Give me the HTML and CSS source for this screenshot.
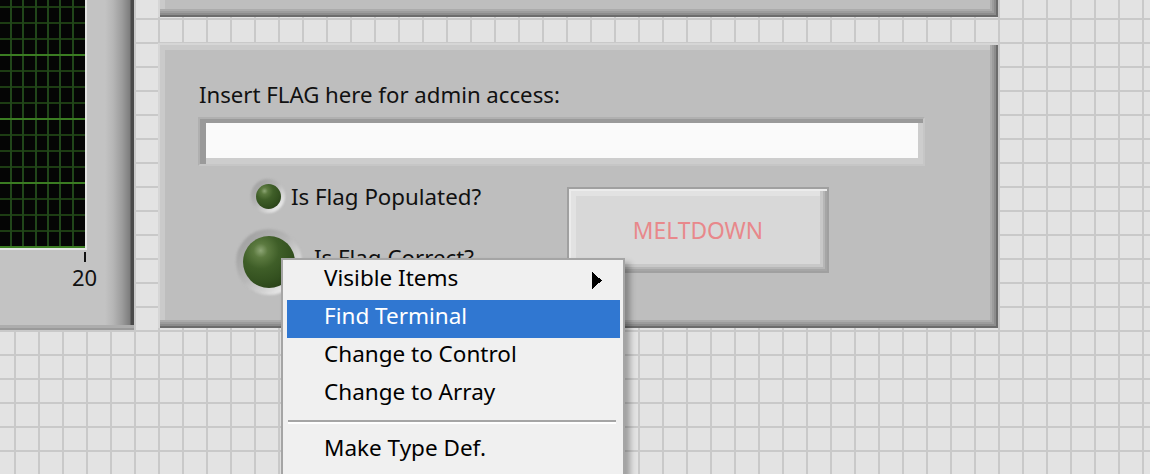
FILE: index.html
```html
<!DOCTYPE html>
<html>
<head>
<meta charset="utf-8">
<link rel="stylesheet" href="styles.css">
</head>
<body>
<div class="canvas">
  <div class="chart-panel">
    <svg class="plot" width="85" height="248" viewBox="0 0 85 248" shape-rendering="crispEdges">
      <rect width="85" height="248" fill="#050505"/>
      <g fill="#1d3c13">
        <rect x="0" y="6" width="85" height="2"/><rect x="0" y="22" width="85" height="2"/>
        <rect x="0" y="38" width="85" height="2"/><rect x="0" y="70" width="85" height="2"/>
        <rect x="0" y="86" width="85" height="2"/><rect x="0" y="102" width="85" height="2"/>
        <rect x="0" y="134" width="85" height="2"/><rect x="0" y="150" width="85" height="2"/>
        <rect x="0" y="166" width="85" height="2"/><rect x="0" y="198" width="85" height="2"/>
        <rect x="0" y="214" width="85" height="2"/><rect x="0" y="230" width="85" height="2"/>
      </g>
      <g fill="#21461a">
        <rect x="10" y="0" width="2" height="248"/><rect x="22" y="0" width="2" height="248"/>
        <rect x="35" y="0" width="2" height="248"/><rect x="47" y="0" width="2" height="248"/>
        <rect x="59" y="0" width="2" height="248"/><rect x="72" y="0" width="2" height="248"/>
      </g>
      <g fill="#3b7c22">
        <rect x="0" y="54" width="85" height="2"/><rect x="0" y="118" width="85" height="2"/>
        <rect x="0" y="182" width="85" height="2"/><rect x="0" y="246" width="85" height="2"/>
      </g>
    </svg>
    <div class="tick"></div>
    <div class="scale-label">20</div>
  </div>
  <div class="top-panel"></div>
  <div class="main-panel">
    <div class="flag-label">Insert FLAG here for admin access:</div>
    <div class="string-box"><div class="string-field"></div></div>
    <div class="lower">
      <div class="indicators">
        <div class="ind ind-small">
          <span class="led-halo"><span class="led"></span></span>
          <span class="ind-label">Is Flag Populated?</span>
        </div>
        <div class="ind ind-big">
          <span class="led-halo"><span class="led"></span></span>
          <span class="ind-label">Is Flag Correct?</span>
        </div>
      </div>
      <div class="btn">MELTDOWN</div>
    </div>
  </div>
</div>
<div class="menu">
  <div class="item">Visible Items<svg class="arrow" width="10" height="17" viewBox="0 0 10 17" shape-rendering="crispEdges"><polygon points="0,0 10,8.5 0,17" fill="#000"/></svg></div>
  <div class="item active">Find Terminal</div>
  <div class="item">Change to Control</div>
  <div class="item">Change to Array</div>
  <div class="sep"></div>
  <div class="item">Make Type Def.</div>
</div>
</body>
</html>
```
FILE: styles.css
```css
html, body {
  margin: 0;
  height: 100%;
}
body {
  width: 1150px;
  height: 474px;
  overflow: hidden;
  position: relative;
  background-color: #e3e3e3;
  background-image:
    linear-gradient(to right, #c9c9c9 2px, transparent 2px),
    linear-gradient(to bottom, #c9c9c9 2px, transparent 2px);
  background-size: 24px 24px;
  background-position: 14px 18px;
  font-family: "Noto Sans", "Open Sans", sans-serif;
  color: #111;
}
.canvas {
  display: grid;
  grid-template-columns: 134px 24px 840px;
  grid-template-rows: 17px 26px 285px;
}
.chart-panel {
  grid-column: 1;
  grid-row: 1 / 4;
  height: 330px;
  display: flex;
  flex-direction: column;
  align-items: flex-start;
  background-color: #c3c3c3;
  background-image: linear-gradient(to right, #c3c3c3 0, #c3c3c3 105px, #b6b6b6 113px, #9c9c9c 122px, #7c7c7c 130px, #4a4a4a 131px, #4a4a4a 134px);
  box-shadow: inset 0 -2px 0 #9a9a9a, inset 0 -5px 0 #adadad;
}
.plot {
  display: block;
  border-right: 2px solid #e4e4e4;
  border-bottom: 2px solid #e4e4e4;
}
.tick {
  width: 2px;
  height: 10px;
  background: #111;
  margin: 2px 0 0 84px;
}
.scale-label {
  margin: 2px 0 0 72px;
  font-size: 22px;
  line-height: 26px;
}
.top-panel {
  grid-column: 3;
  grid-row: 1;
  background: #bebebe;
  box-shadow:
    inset 2px 0 0 #d6d6d6,
    inset -2px -2px 0 #6c6c6c,
    inset -4px -4px 0 #8c8c8c,
    inset -6px -6px 0 #9c9c9c,
    inset -8px -8px 0 #ababab,
    inset 7px 0 0 #cacaca;
}
.main-panel {
  grid-column: 3;
  grid-row: 3;
  background: #bebebe;
  box-shadow:
    inset 2px 2px 0 #d6d6d6,
    inset -2px -2px 0 #6c6c6c,
    inset -4px -4px 0 #8c8c8c,
    inset -6px -6px 0 #9c9c9c,
    inset -8px -8px 0 #ababab,
    inset 7px 7px 0 #cacaca;
  display: flex;
  flex-direction: column;
  align-items: flex-start;
  padding: 39px 0 0 40px;
  box-sizing: border-box;
}
.flag-label {
  font-size: 22.2px;
  line-height: 26px;
  margin-left: 1px;
  white-space: nowrap;
}
.string-box {
  margin-top: 9px;
  width: 727px;
  height: 49px;
  box-sizing: border-box;
  border-style: solid;
  border-width: 2px;
  border-color: #b0b0b0 #c6c6c6 #c6c6c6 #b0b0b0;
  padding: 4px 5px 6px 6px;
  background: #cdcdcd;
  box-shadow: inset 6px 4px 0 #9a9a9a;
}
.string-field {
  height: 100%;
  background: #fafafa;
}
.lower {
  display: flex;
  margin-top: 13px;
}
.indicators {
  width: 369px;
  display: flex;
  flex-direction: column;
  align-items: flex-start;
}
.ind {
  display: flex;
  align-items: center;
}
.ind-label {
  font-size: 22.3px;
  line-height: 26px;
  white-space: nowrap;
}
.led-halo {
  position: relative;
  display: flex;
  align-items: center;
  justify-content: center;
  border-radius: 50%;
}
.led-halo::before {
  content: "";
  position: absolute;
  inset: 0;
  border-radius: 50%;
  background: linear-gradient(135deg, #a0a0a0 10%, #b6b6b6 45%, #d6d6d6 70%, #f4f4f4 90%);
  filter: blur(1px);
}
.led {
  position: relative;
  border-radius: 50%;
  background: radial-gradient(circle at 34% 28%, #8da575 0, #5c7a40 14%, #3f5e28 36%, #33501f 62%, #1f3311 100%);
}
.ind-small {
  margin-left: 53px;
}
.ind-small .led-halo {
  width: 34px;
  height: 34px;
}
.ind-small .led {
  width: 25px;
  height: 25px;
}
.ind-small .ind-label {
  margin-left: 6px;
  margin-top: 2px;
}
.ind-big {
  margin-left: 38px;
  margin-top: 16px;
}
.ind-big .led-halo {
  width: 66px;
  height: 66px;
}
.ind-big .led {
  width: 52px;
  height: 52px;
}
.ind-big .ind-label {
  margin-left: 12px;
  margin-top: -8px;
}
.btn {
  margin-top: 8px;
  width: 262px;
  height: 86px;
  box-sizing: border-box;
  border: 2px solid #a0a0a0;
  background: #d8d8d8;
  box-shadow:
    inset 2px 2px 0 #ececec,
    inset -2px -2px 0 #a6a6a6,
    inset -4px -4px 0 #b6b6b6,
    inset -7px -7px 0 #c8c8c8,
    inset 7px 7px 0 #e2e2e2;
  display: flex;
  align-items: center;
  justify-content: center;
  color: #e8888b;
  font-size: 22.8px;
}
.menu {
  position: absolute;
  left: 281px;
  top: 258px;
  width: 344px;
  height: 230px;
  box-sizing: border-box;
  border: 2px solid #a5a5a5;
  background: #f0f0f0;
  padding: 2px 3px 0 4px;
  box-shadow: 5px 5px 6px rgba(0, 0, 0, 0.3);
}
.item {
  height: 38px;
  line-height: 32px;
  padding: 0 18px 0 37px;
  font-size: 22.5px;
  color: #000;
  display: flex;
  align-items: flex-start;
  justify-content: space-between;
  white-space: nowrap;
}
.item.active {
  background: #3077d1;
  color: #fff;
}
.arrow {
  display: block;
  margin-top: 10px;
}
.sep {
  margin: 6px 4px 8px 1px;
  height: 2px;
  background: #a5a5a5;
  border-bottom: 2px solid #ffffff;
}
```
